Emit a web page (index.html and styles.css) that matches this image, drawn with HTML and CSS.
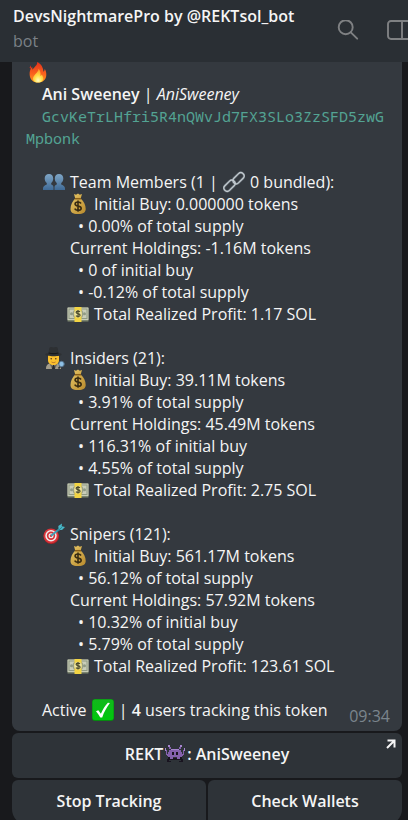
FILE: index.html
```
<!DOCTYPE html>
<html lang="en">
<head>
    <meta charset="UTF-8">
    <meta name="viewport" content="width=device-width, initial-scale=1.0">
    <title>DevsNightmarePro by @REKTsol_bot</title>
    <link rel="stylesheet" href="styles.css">
</head>
<body>
    <!-- Emoji drawings, reused below -->
    <svg class="sprite" aria-hidden="true">
        <defs>
            <linearGradient id="flameFill" x1="0" y1="0" x2="0" y2="1">
                <stop offset="0" stop-color="#e2301c"/>
                <stop offset="0.55" stop-color="#f9601d"/>
                <stop offset="1" stop-color="#fb9a20"/>
            </linearGradient>
            <radialGradient id="flameCore" cx="0.5" cy="0.85" r="0.7">
                <stop offset="0" stop-color="#fffbc0"/>
                <stop offset="0.5" stop-color="#ffe04a"/>
                <stop offset="1" stop-color="#ffa62a"/>
            </radialGradient>
            <linearGradient id="bustFill" x1="0" y1="0" x2="0" y2="1">
                <stop offset="0" stop-color="#7fa6c6"/>
                <stop offset="1" stop-color="#3f6a96"/>
            </linearGradient>
            <linearGradient id="bagFill" x1="0" y1="0" x2="1" y2="1">
                <stop offset="0" stop-color="#e8c868"/>
                <stop offset="1" stop-color="#b98a2c"/>
            </linearGradient>
            <linearGradient id="checkFill" x1="0" y1="0" x2="0" y2="1">
                <stop offset="0" stop-color="#12b81c"/>
                <stop offset="1" stop-color="#00c70c"/>
            </linearGradient>
        </defs>
        <symbol id="fire" viewBox="0 0 22 22">
            <path fill="url(#flameFill)" d="M10 0c1 3-3 5-4.500 8C5 7 4.800 6 5 5 2.500 7.500 2 10.500 2.300 13.500 2.700 18.500 6 21.500 11 21.500s8.500-3 8.700-8c.1-2.500-.4-4.500-1.700-6.500 0 1.500-.5 2.500-1.300 3.200C16.500 6 14.500 2 10 0z"/>
            <path fill="url(#flameCore)" d="M11.500 7c.8 3-4.500 5.500-5.700 9.500-.6 3 1.700 5 5.200 5s6-2 5.500-5c-.2-1.400-1-2.300-1.500-3.500-.4.900-.8 1.300-1.500 1.700C14 11.500 13.500 9 11.500 7z"/>
            <path fill="#e2301c" d="M2.500 5.500l1-2 .3 2-1 2z"/>
        </symbol>
        <symbol id="people" viewBox="0 0 22 22">
            <g fill="url(#bustFill)">
                <path d="M6 3c2.700 0 4.300 1.800 4.200 4.500-.1 2-.8 3.600-2 4.500v1.500c1.800.8 2.300 1.500 2.300 3V19H0v-1.500c0-2 1.200-3 3.800-4V12c-1.300-1-2-2.500-2.100-4.500C1.600 4.800 3.300 3 6 3z"/>
                <path d="M16 3c2.700 0 4.400 1.800 4.300 4.500-.1 2-.8 3.500-2.100 4.500v1.500c2.600 1 3.800 2 3.800 4V19H11.500v-2.500c0-1.500.5-2.200 2.300-3V12c-1.200-.9-1.900-2.500-2-4.500C11.700 4.800 13.300 3 16 3z"/>
            </g>
        </symbol>
        <symbol id="link" viewBox="0 0 22 22">
            <g fill="none" stroke-linecap="round">
                <g stroke="#5d656c" stroke-width="2.600">
                    <rect x="9" y="4" width="13" height="6.500" rx="3.200" transform="rotate(-45 15.500 7.250)"/>
                    <rect x="0" y="11.500" width="13" height="6.500" rx="3.200" transform="rotate(-45 6.500 14.750)"/>
                </g>
                <g stroke="#c3cbd0" stroke-width="1.300">
                    <rect x="9" y="4" width="13" height="6.500" rx="3.200" transform="rotate(-45 15.500 7.250)"/>
                    <rect x="0" y="11.500" width="13" height="6.500" rx="3.200" transform="rotate(-45 6.500 14.750)"/>
                </g>
            </g>
        </symbol>
        <symbol id="bag" viewBox="0 0 22 22">
            <path fill="url(#bagFill)" d="M7 1l2 .8L11 .5l1.800 1.200L15 1l-1.300 4.500c3 2.500 5 6.500 5 10.500 0 3-2 5-7.700 5s-7.500-2-7.500-5c0-4 2-8 4.700-10.500z"/>
            <path fill="none" stroke="#8a5f18" stroke-width="1.500" d="M7.800 5.700h6.300"/>
            <path fill="none" stroke="#392c12" stroke-width="1.600" d="M14 10.500c-.6-1.100-1.600-1.500-3-1.500-1.700 0-2.900.7-2.900 2 0 3 6.100 1.200 6.100 4.200 0 1.400-1.300 2.200-3.200 2.200-1.500 0-2.700-.5-3.300-1.700M11 7.500v11.300"/>
        </symbol>
        <symbol id="cash" viewBox="0 0 22 22">
            <rect x="0.500" y="4.500" width="21" height="14" rx="0.500" fill="#7c8670"/>
            <rect x="0.500" y="4.500" width="21" height="12.500" rx="0.500" fill="#c9cdb9"/>
            <rect x="2" y="6" width="18" height="9.500" fill="none" stroke="#8f9a84"/>
            <circle cx="11" cy="10.800" r="5.500" fill="#98a08a"/>
            <circle cx="4.500" cy="10.800" r="1.500" fill="#8f9a84"/>
            <circle cx="17.500" cy="10.800" r="1.500" fill="#8f9a84"/>
            <path fill="#f2d443" d="M7.500 4h7v15h-7z"/>
            <circle cx="11" cy="10.800" r="3.800" fill="#eee4a0"/>
            <path fill="none" stroke="#4b4a2a" stroke-width="1.200" d="M13 8.800c-1-1.100-3.900-1-3.900.5 0 1.900 4 .9 4 2.900 0 1.500-3.200 1.700-4.200.4M11 7v7.500"/>
        </symbol>
        <symbol id="detective" viewBox="0 0 22 22">
            <path fill="#6b6960" d="M3 22c0-4 2.500-6 7.500-6s7.500 2 7.500 6z"/>
            <path fill="#a39d8c" d="M3 22c0-3 1-4.500 3.500-5.400L9 22zM18 22c0-3-1-4.500-3.500-5.400L12 22z"/>
            <path fill="#e8eaec" d="M7.800 15.500h5.400L10.500 20z"/>
            <path fill="#26292d" d="M10 17h1.200l.8 5H9z"/>
            <path fill="#493527" d="M4.800 7h11.400v5H4.800z"/>
            <path fill="#fbc02d" d="M5 8h11v5c0 3.200-2.300 5-5.500 5S5 16.200 5 13z"/>
            <circle cx="8.200" cy="11.700" r="0.800" fill="#4b3421"/>
            <circle cx="12.800" cy="11.700" r="0.800" fill="#4b3421"/>
            <path fill="none" stroke="#a5622a" stroke-width="0.800" d="M8.500 15c1.300.8 2.700.8 4 0"/>
            <path fill="#2d3033" d="M5.500 6L6.300 1C7-.3 9 0 10.500.6 12-.1 14-.3 14.700 1L15.500 6c2 .3 3.200.8 3.200 1.500 0 1-3.700 1.700-8.200 1.700S2.300 8.500 2.300 7.500C2.300 6.800 3.500 6.300 5.500 6z"/>
            <path fill="none" stroke="#17191b" stroke-width="1.200" d="M5.600 6c3 .8 6.800.8 9.800 0"/>
            <path stroke="#31353a" stroke-width="1.800" d="M15.500 21.500l1.700-2"/>
            <circle cx="18.500" cy="17" r="2.700" fill="#8fc0e4" stroke="#56738c"/>
        </symbol>
        <symbol id="dart" viewBox="0 0 22 22">
            <ellipse cx="8.300" cy="13.500" rx="7.800" ry="7.500" fill="#a91f25"/>
            <circle cx="8" cy="12.800" r="7.400" fill="#d8343a"/>
            <circle cx="8" cy="12.800" r="5.700" fill="#f0eeee"/>
            <circle cx="8" cy="12.800" r="4.200" fill="#d8343a"/>
            <circle cx="8" cy="12.800" r="2.500" fill="#f0eeee"/>
            <circle cx="8" cy="12.800" r="1.200" fill="#d8343a"/>
            <path stroke="#3e9db4" stroke-width="2" d="M8 12.800L18 5"/>
            <path fill="#48b7c7" d="M15.500 5.500L15.300 3 19 .5l-.3 2.700L22 4l-3 3-2.700-.2z"/>
            <path stroke="#25768a" stroke-width="0.800" d="M14 8.500l5-4.300"/>
        </symbol>
        <symbol id="check" viewBox="0 0 22 22">
            <rect width="22" height="22" rx="3" fill="#078a10"/>
            <rect x="0.500" y="0.500" width="21" height="20.500" rx="2.500" fill="url(#checkFill)"/>
            <path fill="#fff" d="M4 12.200l2.300-.9 2.600 3.500c2-4.500 4.300-8.300 7-11l2 .2C14.500 8.500 12 13 10.200 18.500H8.300C7 16 5.600 14 4 12.200z"/>
        </symbol>
        <symbol id="invader" viewBox="0 0 22 22">
            <path fill="#8461ad" d="M7 6h8v1h2v2h1v5h-2v2h-3v-2H9v2H6v-2H4V9h1V7h2zM5 4h2v2H5zM15 4h2v2h-2zM2 7h1v4h2v2H3v-1H2zM19 7h1v5h-1v1h-2v-2h2z"/>
            <path fill="#a685cf" d="M4 2h2v2H4zM16 2h2v2h-2zM1 5h1v3H1zM20 5h1v3h-1zM7 6h8v1H7z"/>
            <path fill="#18131f" d="M8 9h2v3H8zM12 9h2v3h-2zM4 14h2v2h3v-1h4v1h3v-2h2v2h1v3h-4v-1h2v-1H5v1h2v1H3v-3h1z"/>
        </symbol>
    </svg>

    <header class="chat-header">
        <div class="chat-info">
            <h1 class="chat-title">DevsNightmarePro by @REKTsol_bot</h1>
            <p class="chat-status">bot</p>
        </div>
        <button class="icon-button" type="button" aria-label="Search">
            <svg viewBox="0 0 22 22" width="22" height="22" fill="none" stroke="currentColor" stroke-width="1.900" stroke-linecap="round">
                <circle cx="8.700" cy="7.200" r="7"/>
                <path d="M13.800 12.300l6.400 6.400"/>
            </svg>
        </button>
        <button class="icon-button" type="button" aria-label="Toggle side panel">
            <svg viewBox="0 0 26 22" width="26" height="22" fill="none" stroke="currentColor" stroke-width="1.900">
                <rect x="1" y="1" width="23" height="18" rx="3"/>
                <path d="M15 1V19"/>
            </svg>
        </button>
    </header>

    <main class="chat">
        <article class="message">
            <svg class="emoji fire"><use href="#fire"/></svg>
            <p class="token-name"><strong>Ani Sweeney</strong> | <em>AniSweeney</em></p>
            <p class="address">GcvKeTrLHfri5R4nQWvJd7FX3SLo3ZzSFD5zwGMpbonk</p>

            <section class="group">
                <h2 class="line"><svg class="emoji"><use href="#people"/></svg>Team Members (1 | <svg class="emoji inline"><use href="#link"/></svg> 0 bundled):</h2>
                <p class="line sub"><svg class="emoji"><use href="#bag"/></svg>Initial Buy: 0.000000 tokens</p>
                <p class="bullet">• 0.00% of total supply</p>
                <p class="holdings">Current Holdings: -1.16M tokens</p>
                <p class="bullet">• 0 of initial buy</p>
                <p class="bullet">• -0.12% of total supply</p>
                <p class="line sub"><svg class="emoji"><use href="#cash"/></svg>Total Realized Profit: 1.17 SOL</p>
            </section>

            <section class="group">
                <h2 class="line"><svg class="emoji"><use href="#detective"/></svg>Insiders (21):</h2>
                <p class="line sub"><svg class="emoji"><use href="#bag"/></svg>Initial Buy: 39.11M tokens</p>
                <p class="bullet">• 3.91% of total supply</p>
                <p class="holdings">Current Holdings: 45.49M tokens</p>
                <p class="bullet">• 116.31% of initial buy</p>
                <p class="bullet">• 4.55% of total supply</p>
                <p class="line sub"><svg class="emoji"><use href="#cash"/></svg>Total Realized Profit: 2.75 SOL</p>
            </section>

            <section class="group">
                <h2 class="line"><svg class="emoji"><use href="#dart"/></svg>Snipers (121):</h2>
                <p class="line sub"><svg class="emoji"><use href="#bag"/></svg>Initial Buy: 561.17M tokens</p>
                <p class="bullet">• 56.12% of total supply</p>
                <p class="holdings">Current Holdings: 57.92M tokens</p>
                <p class="bullet">• 10.32% of initial buy</p>
                <p class="bullet">• 5.79% of total supply</p>
                <p class="line sub"><svg class="emoji"><use href="#cash"/></svg>Total Realized Profit: 123.61 SOL</p>
            </section>

            <footer class="message-footer">
                <p>Active <svg class="emoji inline"><use href="#check"/></svg> | <strong>4</strong> users tracking this token</p>
                <time class="time">09:34</time>
            </footer>
        </article>

        <div class="keyboard">
            <button class="key wide" type="button">REKT<svg class="emoji inline"><use href="#invader"/></svg>: AniSweeney
                <svg class="arrow" viewBox="0 0 10 10" fill="none" stroke="currentColor" stroke-width="2"><path d="M1.500 1.500h7v7M8.500 1.500L1 9"/></svg>
            </button>
            <button class="key" type="button">Stop Tracking</button>
            <button class="key" type="button">Check Wallets</button>
        </div>
    </main>
</body>
</html>
```
FILE: styles.css
```
* {
    box-sizing: border-box;
}

body {
    margin: 0;
    height: 100vh;
    overflow: hidden;
    display: flex;
    flex-direction: column;
    background-color: #18191c;
    color: #f5f5f5;
    font-family: "Open Sans", "Noto Sans", sans-serif;
    font-size: 16px;
    line-height: 22px;
}

h1, h2, p {
    margin: 0;
    font-size: 16px;
    font-weight: 400;
}

strong {
    font-weight: 600;
}

button {
    border: none;
    font: inherit;
    color: inherit;
    cursor: pointer;
}

.sprite {
    position: absolute;
    width: 0;
    height: 0;
}

/* Header */
.chat-header {
    display: flex;
    flex-shrink: 0;
    align-items: center;
    gap: 28px;
    height: 62px;
    padding-left: 13px;
    background-color: #2a2f34;
    overflow: hidden;
}

.chat-info {
    flex: 1;
    min-width: 0;
    padding-bottom: 4px;
}

.chat-title {
    font-weight: 600;
    line-height: 24px;
    white-space: nowrap;
}

.chat-status {
    line-height: 26px;
    color: #7b8187;
}

.icon-button {
    display: flex;
    flex-shrink: 0;
    padding: 0;
    background: none;
    color: #7f8183;
}

.icon-button:last-child {
    margin-right: -5px;
}

/* Message */
.chat {
    padding: 0 6px 0 12px;
}

.message {
    padding: 0 12px 10px 14px;
    background-color: #34393f;
    border-radius: 0 0 8px 8px;
}

.emoji {
    display: block;
    flex-shrink: 0;
    width: 22px;
    height: 22px;
}

.emoji.inline {
    display: inline-block;
    margin: 0 1px;
    vertical-align: top;
}

.fire {
    height: 21px;
    margin-left: 1px;
}

.token-name {
    padding-left: 16px;
}

.address {
    text-indent: 16px;
    color: #53a393;
    font-family: "Noto Sans Mono", "DejaVu Sans Mono", monospace;
    font-size: 15px;
    word-break: break-all;
}

.group {
    margin: 22px 0 22px 17px;
}

.line {
    display: flex;
    align-items: center;
    white-space: pre;
}

.line > .emoji:first-child {
    margin-right: 5px;
}

.sub {
    padding-left: 24px;
}

.bullet {
    padding-left: 35px;
}

.holdings {
    padding-left: 27px;
}

.message-footer {
    display: flex;
    justify-content: space-between;
    padding-left: 16px;
}

.message-footer p {
    white-space: nowrap;
}

.time {
    margin-bottom: -6px;
    align-self: flex-end;
    color: #7b858d;
}

/* Inline keyboard */
.keyboard {
    display: grid;
    grid-template-columns: 1fr 1fr;
    gap: 2px;
    margin-top: 2px;
}

.key {
    position: relative;
    display: flex;
    align-items: center;
    justify-content: center;
    height: 45px;
    padding: 0 12px 3px;
    border-radius: 6px 6px 6px 16px;
    background-color: #2e3338;
    font-weight: 600;
}

.key:last-child {
    border-radius: 6px 6px 16px 6px;
}

.key.wide {
    grid-column: 1 / -1;
    border-radius: 6px;
}

.arrow {
    position: absolute;
    top: 6px;
    right: 6px;
    width: 10px;
    height: 10px;
}
```
